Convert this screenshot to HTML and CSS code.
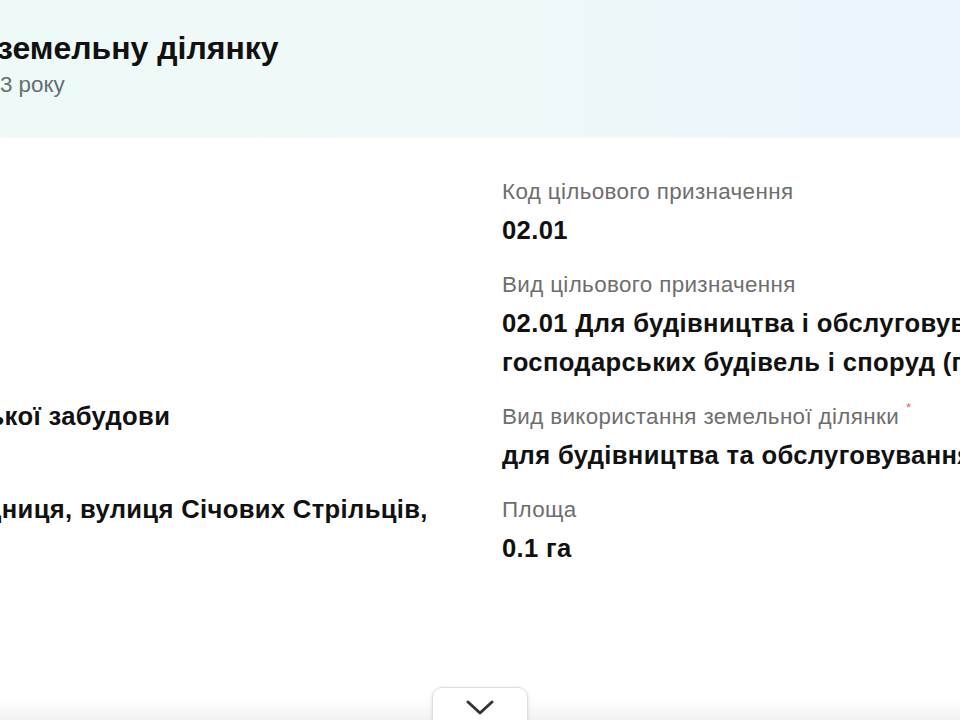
FILE: index.html
```html
<!DOCTYPE html>
<html lang="uk">
<head>
<meta charset="utf-8">
<title>Інформація про земельну ділянку</title>
<link rel="stylesheet" href="styles.css">
</head>
<body>
  <header class="hero">
    <div class="hero-inner">
      <h1 class="hero-title">Інформація про земельну ділянку</h1>
      <p class="hero-sub">Дані станом на 12.05.2023 року</p>
    </div>
  </header>

  <main class="details">
    <section class="col col-left">
      <div class="field">
        <div class="label">Форма власності</div>
        <div class="value">Приватна</div>
      </div>
      <div class="field">
        <div class="label">Область</div>
        <div class="value">Житомирська</div>
      </div>
      <div class="field">
        <div class="label">Категорія земель</div>
        <div class="value">Землі житлової та громадської забудови</div>
      </div>
      <div class="field">
        <div class="label">Адреса</div>
        <div class="value">Житомирська обл., с. Городниця, вулиця Січових Стрільців, буд. 12</div>
      </div>
    </section>

    <section class="col col-right">
      <div class="field">
        <div class="label">Код цільового призначення</div>
        <div class="value">02.01</div>
      </div>
      <div class="field">
        <div class="label">Вид цільового призначення</div>
        <div class="value">02.01 Для будівництва і обслуговування житлового будинку, господарських будівель і споруд (присадибна ділянка)</div>
      </div>
      <div class="field">
        <div class="label">Вид використання земельної ділянки<sup class="req">*</sup></div>
        <div class="value">для будівництва та обслуговування житлового будинку</div>
      </div>
      <div class="field">
        <div class="label">Площа</div>
        <div class="value">0.1 га</div>
      </div>
    </section>
  </main>

  <div class="bottom-shade"></div>
  <button class="expand" type="button" aria-label="Показати більше">
    <svg width="28" height="16" viewBox="0 0 28 16" aria-hidden="true">
      <polyline points="2,2 14,13 26,2" fill="none" stroke="#333" stroke-width="3" stroke-linecap="round" stroke-linejoin="round"/>
    </svg>
  </button>
</body>
</html>
```

FILE: styles.css
```css
* { box-sizing: border-box; }

html, body {
  margin: 0;
  padding: 0;
  height: 100%;
}

body {
  font-family: "Liberation Sans", Arial, sans-serif;
  color: #111;
  background: #fff;
  overflow: hidden;
}

.hero {
  height: 137px;
  background: linear-gradient(90deg, #eefaf7 0%, #eef8f9 55%, #ecf4fd 100%);
  box-shadow: 0 1px 2px rgba(0, 0, 0, 0.04);
  padding-top: 28px;
  overflow: hidden;
}

.hero-inner {
  margin-left: -262px;
  white-space: nowrap;
}

.hero-title {
  margin: 0;
  font-size: 32px;
  line-height: 40px;
  font-weight: 700;
  color: #111;
}

.hero-sub {
  margin: 0;
  font-size: 22.4px;
  line-height: 34px;
  color: #666d75;
}

.details {
  display: grid;
  grid-template-columns: 821px 860px;
  column-gap: 42px;
  margin-left: -361px;
  padding-top: 38px;
}

.field {
  margin-bottom: 18px;
}

.label {
  font-size: 22.4px;
  line-height: 34px;
  letter-spacing: 0.36px;
  color: #6e6e6e;
}

.value {
  margin-top: 2px;
  font-size: 25.6px;
  line-height: 39px;
  font-weight: 700;
  letter-spacing: 0.35px;
  color: #111;
}

.req {
  color: #e06666;
  font-size: 13px;
  vertical-align: top;
  line-height: 1;
  margin-left: 7px;
  position: relative;
  top: 1px;
}

.bottom-shade {
  position: fixed;
  left: 0;
  right: 0;
  bottom: 0;
  height: 22px;
  background: linear-gradient(180deg, rgba(0, 0, 0, 0) 0%, rgba(0, 0, 0, 0.05) 100%);
  pointer-events: none;
}

.expand {
  position: fixed;
  left: 432px;
  top: 687px;
  width: 96px;
  height: 52px;
  padding: 12px 0 0;
  border: 1px solid #dedede;
  border-radius: 10px;
  background: #fff;
  box-shadow: 0 1px 4px rgba(0, 0, 0, 0.12);
  display: flex;
  justify-content: center;
  align-items: flex-start;
  cursor: pointer;
}
```
